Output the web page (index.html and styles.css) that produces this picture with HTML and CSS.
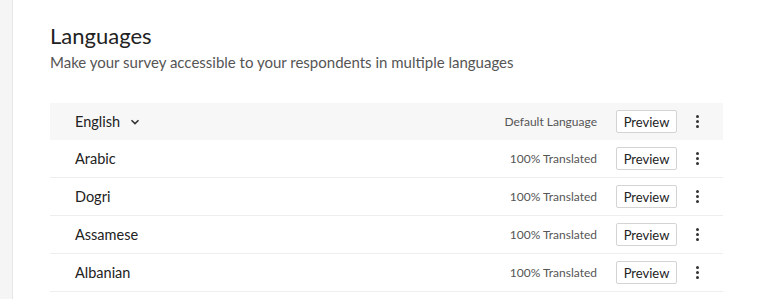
FILE: index.html
```html
<!DOCTYPE html>
<html lang="en">
<head>
    <meta charset="UTF-8">
    <title>Languages</title>
    <link rel="stylesheet" href="styles.css">
</head>
<body>

<div class="side"></div>
<div class="main">
    <h2>Languages</h2>
    <p class="sub">Make your survey accessible to your respondents in multiple languages</p>

    <div class="lang-list">
        <div class="lang-row default">
            <div class="name">English
                <svg class="chev" width="10" height="6" viewBox="0 0 10 6"><path d="M1.5 1.2 L5 4.6 L8.5 1.2" fill="none" stroke="#333" stroke-width="1.6"/></svg>
            </div>
            <span class="status">Default Language</span>
            <button class="preview">Preview</button>
            <span class="more"><i></i><i></i><i></i></span>
        </div>
        <div class="lang-row">
            <div class="name">Arabic</div>
            <span class="status">100% Translated</span>
            <button class="preview">Preview</button>
            <span class="more"><i></i><i></i><i></i></span>
        </div>
        <div class="lang-row">
            <div class="name">Dogri</div>
            <span class="status">100% Translated</span>
            <button class="preview">Preview</button>
            <span class="more"><i></i><i></i><i></i></span>
        </div>
        <div class="lang-row">
            <div class="name">Assamese</div>
            <span class="status">100% Translated</span>
            <button class="preview">Preview</button>
            <span class="more"><i></i><i></i><i></i></span>
        </div>
        <div class="lang-row">
            <div class="name">Albanian</div>
            <span class="status">100% Translated</span>
            <button class="preview">Preview</button>
            <span class="more"><i></i><i></i><i></i></span>
        </div>
    </div>
</div>

</body>
</html>
```

FILE: styles.css
```css
body {
    margin: 0;
    font-family: Lato, "Liberation Sans", sans-serif;
    background-color: white;
    display: flex;
    height: 299px;
    overflow: hidden;
}
.side {
    width: 12px;
    background-color: #f5f5f5;
    border-right: 1px solid #e6e6e6;
}
.main {
    flex: 1;
    padding: 22px 36px 0 37px;
}
h2 {
    margin: 0;
    font-size: 22px;
    font-weight: 400;
    color: #222;
    line-height: 27px;
}
.sub {
    margin: 3px 0 0;
    font-size: 15px;
    color: #555;
    line-height: 20px;
}
.lang-list {
    margin-top: 31px;
}
.lang-row {
    display: flex;
    align-items: center;
    height: 37px;
    border-bottom: 1px solid #eeeeee;
    padding: 0 23px 0 25px;
}
.lang-row.default {
    background-color: #f7f7f7;
    border-bottom: none;
}
.name {
    flex: 1;
    font-size: 14.5px;
    color: #222;
    display: flex;
    align-items: center;
}
.chev {
    margin-left: 10px;
}
.status {
    font-size: 12px;
    color: #555;
}
.preview {
    margin-left: 19px;
    width: 61px;
    height: 23px;
    padding: 0;
    background-color: white;
    border: 1px solid #d4d4d4;
    border-radius: 2px;
    font-family: inherit;
    font-size: 13px;
    color: #222;
}
.more {
    margin-left: 17px;
    width: 6px;
    display: flex;
    flex-direction: column;
    align-items: center;
    gap: 2px;
}
.more i {
    width: 3px;
    height: 3px;
    border-radius: 50%;
    background-color: #333;
}
```
